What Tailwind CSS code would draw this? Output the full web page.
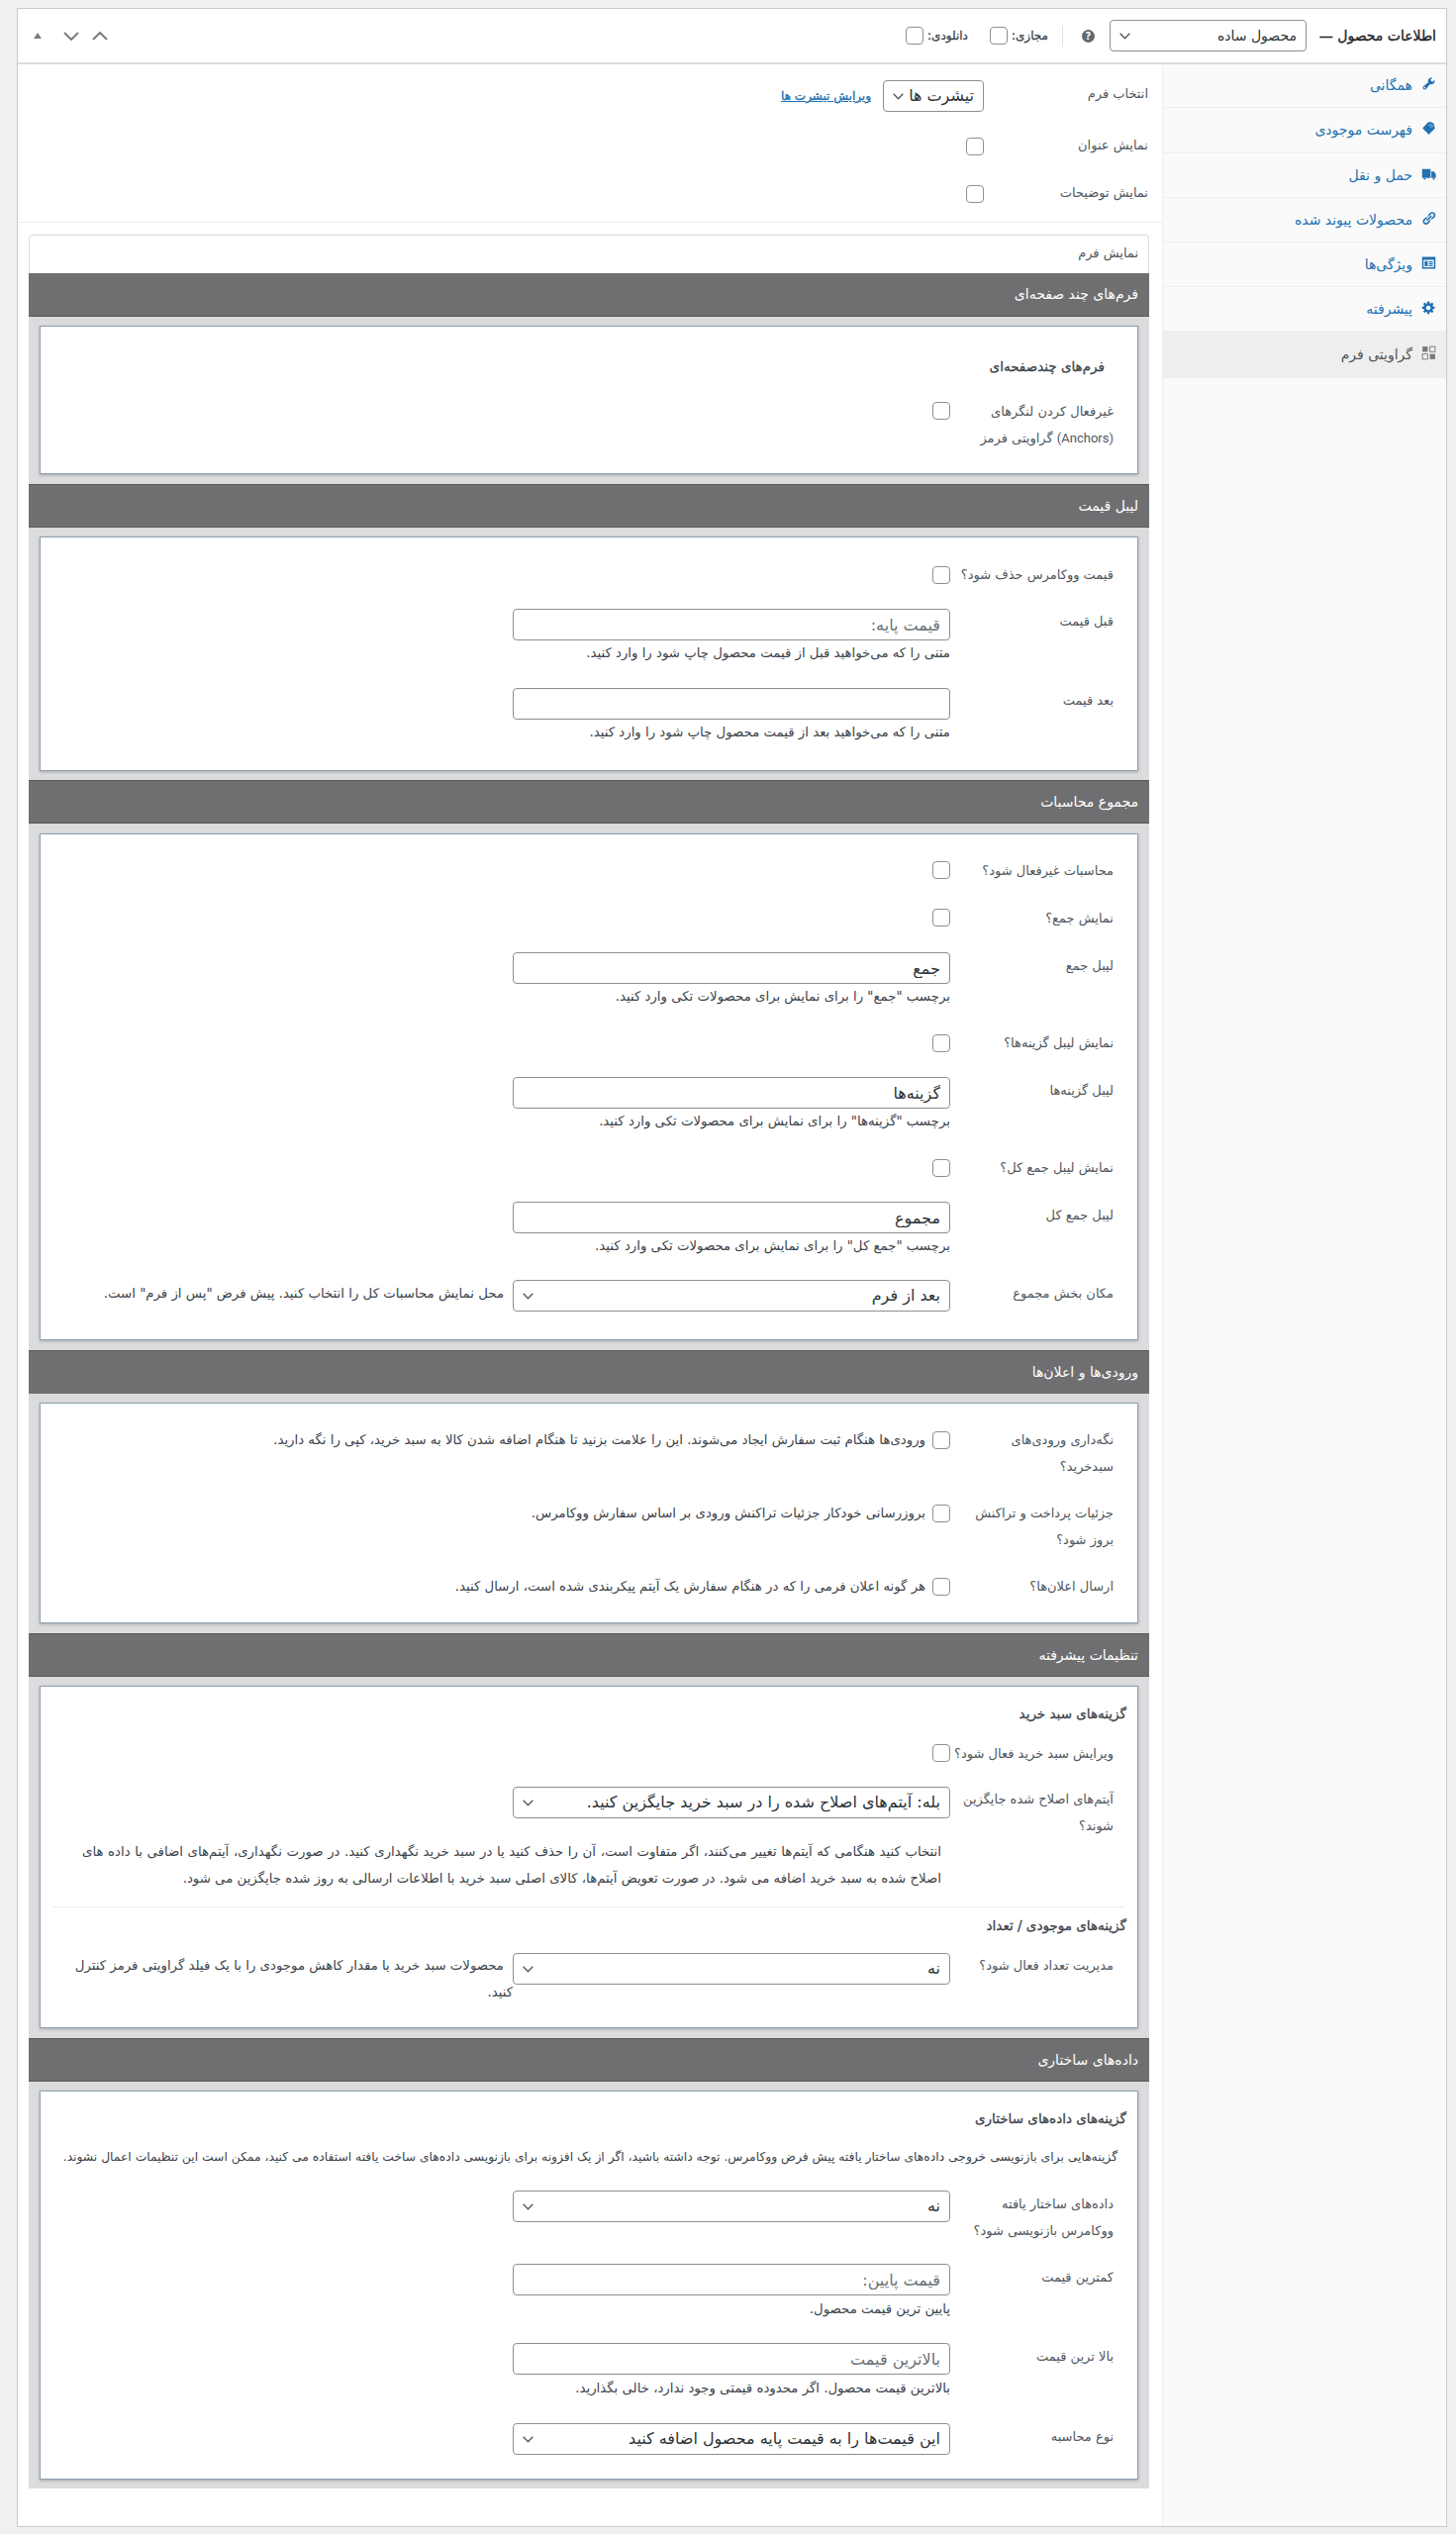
<!DOCTYPE html>
<html dir="rtl" lang="fa">
<head>
    <meta charset="UTF-8">
    <meta name="viewport" content="width=device-width, initial-scale=1.0">
    <title>اطلاعات محصول</title>
    <script src="https://cdn.jsdelivr.net/npm/@tailwindcss/browser@4"></script>
</head>
<body class="bg-[#f0f0f1] pt-2 pl-[17px] pr-[9px] font-['DejaVu_Sans',sans-serif] text-[13px] text-[#50575e]">

    <div class="bg-white border border-[#c9cacc]">

        <!-- Header -->
        <div class="h-[56px] border-b-2 border-[#dcdcde] flex items-center pr-[10px] pl-[16px]">
            <h2 class="text-[14px] [-webkit-text-stroke:0.35px] text-[#1d2327] whitespace-nowrap w-[118px] ml-[13px]">اطلاعات محصول —</h2>
            <span class="relative block w-[199px] h-[32px]">
                <select class="appearance-none w-full h-full bg-white border border-[#8c8f94] rounded px-[9px] text-[14px] text-[#2c3338]"><option>محصول ساده</option></select>
                <svg class="absolute left-[10px] top-[13px] w-[11px] h-[7px]" viewBox="0 0 11 7" fill="none" stroke="#50575e" stroke-width="1.3"><path d="M.7.7l4.8 5 4.8-5"/></svg>
            </span>
            <span class="w-[13px] h-[13px] rounded-full bg-[#646970] text-white text-[10px] font-bold leading-[13px] text-center mr-[15px]">?</span>
            <span class="w-px h-[21px] bg-[#e4e4e6] mr-[19px]"></span>
            <label class="flex items-center gap-[4px] text-[#3c434a] [-webkit-text-stroke:0.3px] text-[12px] mr-[14px]">مجازی:<input type="checkbox" class="appearance-none w-[18px] h-[18px] rounded bg-white border border-[#8c8f94]"></label>
            <label class="flex items-center gap-[4px] text-[#3c434a] [-webkit-text-stroke:0.3px] text-[12px] mr-[22px]">دانلودی:<input type="checkbox" class="appearance-none w-[18px] h-[18px] rounded bg-white border border-[#8c8f94]"></label>
            <div class="mr-auto flex items-center gap-[13px]" dir="ltr">
                <svg class="w-[8px] h-[6px]" viewBox="0 0 8 6" fill="#787c82"><path d="M4 0l4 6H0z"/></svg>
                <svg class="w-[16px] h-[9px] ml-[9px]" viewBox="0 0 16 9" fill="none" stroke="#787c82" stroke-width="2"><path d="M1 1l7 7 7-7"/></svg>
                <svg class="w-[16px] h-[9px]" viewBox="0 0 16 9" fill="none" stroke="#787c82" stroke-width="2"><path d="M1 8l7-7 7 7"/></svg>
            </div>
        </div>

        <div class="flex">

            <!-- Tabs -->
            <ul class="w-[287px] shrink-0 bg-[#fafafa] border-l border-[#eeeeee] text-[#2271b1] text-[14px]">
                <li class="h-[44px] border-b border-[#eeeeee] flex items-center gap-[9px] pr-[10px]">
                    <svg class="w-[15px] h-[15px] -mt-1" viewBox="0 0 20 20" fill="currentColor"><path d="M16.68 9.77c-1.34 1.34-3.3 1.67-4.95.99l-5.41 6.52c-.99.99-2.59.99-3.58 0s-.99-2.59 0-3.58l6.52-5.42c-.68-1.65-.35-3.61.99-4.95 1.28-1.28 3.12-1.62 4.72-1.06l-2.89 2.89 2.82 2.82 2.86-2.87c.53 1.58.18 3.39-1.08 4.66zM3.81 16.21c.4.39 1.04.39 1.43 0 .4-.4.4-1.04 0-1.43-.39-.4-1.03-.4-1.43 0-.39.39-.39 1.03 0 1.43z"/></svg>
                    همگانی
                </li>
                <li class="h-[46px] border-b border-[#eeeeee] flex items-center gap-[9px] pr-[10px]">
                    <svg class="w-[15px] h-[15px] -mt-1" viewBox="0 0 20 20" fill="currentColor"><path d="M9.5 1.5L1.5 10l8.5 8.5 8.5-8.5-2-6.5-3.5-2z"/><path d="M11.5 3.5l5 5M10 5.5l4 4" stroke="#fafafa" stroke-width="0.8" fill="none"/></svg>
                    فهرست موجودی
                </li>
                <li class="h-[45px] border-b border-[#eeeeee] flex items-center gap-[9px] pr-[10px]">
                    <svg class="w-[15px] h-[15px] -mt-1" viewBox="0 0 20 20" fill="currentColor"><path d="M1 3.5h11.5v12H5.9a2 2 0 0 0-2.8 0H1zM13.5 7H17l2.5 3.2v5.3h-1.4a2 2 0 0 0-2.8 0h-1.8z"/><circle cx="4.5" cy="16.5" r="1.5"/><circle cx="16.7" cy="16.5" r="1.5"/></svg>
                    حمل و نقل
                </li>
                <li class="h-[45px] border-b border-[#eeeeee] flex items-center gap-[9px] pr-[10px]">
                    <svg class="w-[15px] h-[15px] -mt-1" viewBox="0 0 20 20" fill="currentColor"><path d="M17.74 2.76c1.68 1.69 1.68 4.41 0 6.1l-1.53 1.52c-1.12 1.12-2.7 1.47-4.14 1.09l2.62-2.61.76-.77.76-.76c.84-.84.84-2.2 0-3.04-.84-.85-2.2-.85-3.04 0l-.77.76-3.38 3.38c-.37-1.44-.02-3.02 1.1-4.14l1.52-1.53c1.69-1.68 4.42-1.68 6.1 0zM8.59 13.43l5.34-5.34c.42-.42.42-1.1 0-1.52-.44-.43-1.13-.39-1.53 0l-5.33 5.34c-.42.42-.42 1.1 0 1.52.44.43 1.13.39 1.52 0zm-.76 2.29l4.14-4.15c.38 1.44.03 3.02-1.09 4.14l-1.52 1.53c-1.69 1.68-4.41 1.68-6.1 0-1.68-1.68-1.68-4.42 0-6.1l1.53-1.52c1.12-1.12 2.7-1.47 4.14-1.1l-4.14 4.15c-.85.84-.85 2.2 0 3.05.84.84 2.2.84 3.04 0z"/></svg>
                    محصولات پیوند شده
                </li>
                <li class="h-[45px] border-b border-[#eeeeee] flex items-center gap-[9px] pr-[10px]">
                    <svg class="w-[15px] h-[15px] -mt-1" viewBox="0 0 20 20" fill="currentColor"><path fill-rule="evenodd" d="M1 2h18v16H1zM3 6v10h14V6z"/><path d="M4.5 7.5h4v7h-4zM10 8h5.5v1.5H10zM10 10.5h5.5V12H10zM10 13h5.5v1.5H10z"/></svg>
                    ویژگی‌ها
                </li>
                <li class="h-[45px] border-b border-[#eeeeee] flex items-center gap-[9px] pr-[10px]">
                    <svg class="w-[15px] h-[15px] -mt-1" viewBox="0 0 20 20" fill="currentColor"><path d="M18 12h-2.18c-.17.7-.44 1.35-.81 1.93l1.54 1.54-2.1 2.1-1.54-1.54c-.58.36-1.23.63-1.91.79V19H8v-2.18c-.68-.16-1.33-.43-1.91-.79l-1.54 1.54-2.12-2.12 1.54-1.54c-.36-.58-.63-1.23-.79-1.91H1V9.03h2.17c.16-.7.44-1.35.8-1.94L2.43 5.55l2.1-2.1 1.54 1.54c.58-.37 1.24-.64 1.93-.81V2h3v2.18c.68.16 1.33.43 1.91.79l1.54-1.54 2.12 2.12-1.54 1.54c.36.59.64 1.24.8 1.94H18V12zm-8.5 1.5c1.66 0 3-1.34 3-3s-1.34-3-3-3-3 1.34-3 3 1.34 3 3 3z"/></svg>
                    پیشرفته
                </li>
                <li class="h-[47px] bg-[#eeeeee] text-[#555555] flex items-center gap-[9px] pr-[10px]">
                    <svg class="w-[15px] h-[15px] -mt-1" viewBox="0 0 20 20"><rect x="1.5" y="1.5" width="7" height="7" fill="#777"/><rect x="11.5" y="1.5" width="7" height="7" fill="none" stroke="#777" stroke-width="1.2"/><rect x="1.5" y="11.5" width="7" height="7" fill="none" stroke="#777" stroke-width="1.2"/><rect x="11.5" y="11.5" width="7" height="7" fill="#777"/></svg>
                    گراویتی فرم
                </li>
            </ul>

            <!-- Panel -->
            <div class="flex-1 min-w-0 pt-[16px] pb-[38px]">

                <div class="pr-[14px]">
                    <div class="flex">
                        <div class="w-[166px] shrink-0 leading-[27px]">انتخاب فرم</div>
                        <span class="relative block w-[102px] h-[32px]">
                            <select class="appearance-none w-full h-full bg-white border border-[#8c8f94] rounded px-[9px] text-[16px] text-[#2c3338]"><option>تیشرت ها</option></select>
                            <svg class="absolute left-[10px] top-[13px] w-[11px] h-[7px]" viewBox="0 0 11 7" fill="none" stroke="#50575e" stroke-width="1.3"><path d="M.7.7l4.8 5 4.8-5"/></svg>
                        </span>
                        <a href="#" class="mr-[12px] mt-[3px] leading-[27px] text-[12px] [-webkit-text-stroke:0.35px] text-[#2271b1] underline">ویرایش تیشرت ها</a>
                    </div>
                    <div class="flex mt-[20px]">
                        <div class="w-[166px] shrink-0 leading-[27px]">نمایش عنوان</div>
                        <input type="checkbox" class="appearance-none w-[18px] h-[18px] mt-[6px] rounded bg-white border border-[#8c8f94]">
                    </div>
                    <div class="flex mt-[21px]">
                        <div class="w-[166px] shrink-0 leading-[27px]">نمایش توضیحات</div>
                        <input type="checkbox" class="appearance-none w-[18px] h-[18px] mt-[6px] rounded bg-white border border-[#8c8f94]">
                    </div>
                </div>

                <div class="border-t border-[#eeeeee] mt-[16px]"></div>

                <div class="mt-[12px] mr-[13px] ml-[11px]">
                    <div class="h-[39px] border border-b-0 border-[#dcdcde] rounded-t pr-[10px] leading-[36px]">نمایش فرم</div>

                    <!-- Multi page forms -->
                    <div class="h-[44px] bg-[#6f6f71] border-b border-[#58585a] text-white text-[14px] pr-[11px] leading-[43px]">فرم‌های چند صفحه‌ای</div>
                    <div class="bg-[#dcdcde] px-[11px] pt-[9px] pb-[10px]">
                        <div class="h-[150px] bg-white border border-[#8ea2b2] shadow-[0_1px_3px_rgba(0,0,0,0.25)] pr-[24px] pt-[27px]">
                            <h3 class="text-[13.5px] [-webkit-text-stroke:0.3px] text-[#3c434a] leading-[27px] pr-[9px]">فرم‌های چندصفحه‌ای</h3>
                            <div class="flex mt-[18px]">
                                <div class="w-[165px] shrink-0 leading-[27px]">غیرفعال کردن لنگرهای<br><span class="font-['Roboto']">(Anchors)</span> گراویتی فرمز</div>
                                <input type="checkbox" class="appearance-none w-[18px] h-[18px] mt-[4px] rounded bg-white border border-[#8c8f94]">
                            </div>
                        </div>
                    </div>

                    <!-- Price label -->
                    <div class="h-[44px] bg-[#6f6f71] border-t border-b border-[#58585a] text-white text-[14px] pr-[11px] leading-[42px]">لیبل قیمت</div>
                    <div class="bg-[#dcdcde] px-[11px] pt-[9px] pb-[9px]">
                        <div class="h-[237px] bg-white border border-[#8ea2b2] shadow-[0_1px_3px_rgba(0,0,0,0.25)] pr-[24px] pt-[24px]">
                            <div class="flex">
                                <div class="w-[165px] shrink-0 leading-[27px]">قیمت ووکامرس حذف شود؟</div>
                                <input type="checkbox" class="appearance-none w-[18px] h-[18px] mt-[5px] rounded bg-white border border-[#8c8f94]">
                            </div>
                            <div class="flex mt-[20px]">
                                <div class="w-[165px] shrink-0 leading-[27px]">قبل قیمت</div>
                                <div class="pt-px">
                                    <input type="text" placeholder="قیمت پایه:" class="block w-[442px] h-[32px] bg-white border border-[#8c8f94] rounded px-[9px] text-[16px] text-[#2c3338] placeholder:text-[#6b7076]">
                                    <p class="leading-[26px] text-[13.3px] text-[#3c434a]">متنی را که می‌خواهید قبل از قیمت محصول چاپ شود را وارد کنید.</p>
                                </div>
                            </div>
                            <div class="flex mt-[21px]">
                                <div class="w-[165px] shrink-0 leading-[27px]">بعد قیمت</div>
                                <div class="pt-px">
                                    <input type="text" class="block w-[442px] h-[32px] bg-white border border-[#8c8f94] rounded px-[9px] text-[16px] text-[#2c3338]">
                                    <p class="leading-[26px] text-[13.3px] text-[#3c434a]">متنی را که می‌خواهید بعد از قیمت محصول چاپ شود را وارد کنید.</p>
                                </div>
                            </div>
                        </div>
                    </div>

                    <!-- Totals -->
                    <div class="h-[44px] bg-[#6f6f71] border-t border-b border-[#58585a] text-white text-[14px] pr-[11px] leading-[42px]">مجموع محاسبات</div>
                    <div class="bg-[#dcdcde] px-[11px] pt-[10px] pb-[10px]">
                        <div class="h-[512px] bg-white border border-[#8ea2b2] shadow-[0_1px_3px_rgba(0,0,0,0.25)] pr-[24px] pt-[23px]">
                            <div class="flex">
                                <div class="w-[165px] shrink-0 leading-[27px]">محاسبات غیرفعال شود؟</div>
                                <input type="checkbox" class="appearance-none w-[18px] h-[18px] mt-[4px] rounded bg-white border border-[#8c8f94]">
                            </div>
                            <div class="flex mt-[21px]">
                                <div class="w-[165px] shrink-0 leading-[27px]">نمایش جمع؟</div>
                                <input type="checkbox" class="appearance-none w-[18px] h-[18px] mt-[4px] rounded bg-white border border-[#8c8f94]">
                            </div>
                            <div class="flex mt-[21px]">
                                <div class="w-[165px] shrink-0 leading-[27px]">لیبل جمع</div>
                                <div>
                                    <input type="text" value="جمع" class="block w-[442px] h-[32px] bg-white border border-[#8c8f94] rounded px-[9px] text-[16px] text-[#2c3338]">
                                    <p class="leading-[26px] text-[13.3px] text-[#3c434a]">برچسب "جمع" را برای نمایش برای محصولات تکی وارد کنید.</p>
                                </div>
                            </div>
                            <div class="flex mt-[20px]">
                                <div class="w-[165px] shrink-0 leading-[27px]">نمایش لیبل گزینه‌ها؟</div>
                                <input type="checkbox" class="appearance-none w-[18px] h-[18px] mt-[5px] rounded bg-white border border-[#8c8f94]">
                            </div>
                            <div class="flex mt-[21px]">
                                <div class="w-[165px] shrink-0 leading-[27px]">لیبل گزینه‌ها</div>
                                <div>
                                    <input type="text" value="گزینه‌ها" class="block w-[442px] h-[32px] bg-white border border-[#8c8f94] rounded px-[9px] text-[16px] text-[#2c3338]">
                                    <p class="leading-[26px] text-[13.3px] text-[#3c434a]">برچسب "گزینه‌ها" را برای نمایش برای محصولات تکی وارد کنید.</p>
                                </div>
                            </div>
                            <div class="flex mt-[20px]">
                                <div class="w-[165px] shrink-0 leading-[27px]">نمایش لیبل جمع کل؟</div>
                                <input type="checkbox" class="appearance-none w-[18px] h-[18px] mt-[5px] rounded bg-white border border-[#8c8f94]">
                            </div>
                            <div class="flex mt-[21px]">
                                <div class="w-[165px] shrink-0 leading-[27px]">لیبل جمع کل</div>
                                <div>
                                    <input type="text" value="مجموع" class="block w-[442px] h-[32px] bg-white border border-[#8c8f94] rounded px-[9px] text-[16px] text-[#2c3338]">
                                    <p class="leading-[26px] text-[13.3px] text-[#3c434a]">برچسب "جمع کل" را برای نمایش برای محصولات تکی وارد کنید.</p>
                                </div>
                            </div>
                            <div class="flex mt-[21px]">
                                <div class="w-[165px] shrink-0 leading-[27px]">مکان بخش مجموع</div>
                                <span class="relative block w-[442px] h-[32px]">
                                    <select class="appearance-none w-full h-full bg-white border border-[#8c8f94] rounded px-[9px] text-[16px] text-[#2c3338]"><option>بعد از فرم</option></select>
                                    <svg class="absolute left-[10px] top-[13px] w-[11px] h-[7px]" viewBox="0 0 11 7" fill="none" stroke="#50575e" stroke-width="1.3"><path d="M.7.7l4.8 5 4.8-5"/></svg>
                                </span>
                                <p class="mr-[9px] leading-[27px] text-[13.3px] text-[#3c434a]">محل نمایش محاسبات کل را انتخاب کنید. پیش فرض "پس از فرم" است.</p>
                            </div>
                        </div>
                    </div>

                    <!-- Entries and notifications -->
                    <div class="h-[44px] bg-[#6f6f71] border-t border-[#58585a] text-white text-[14px] pr-[11px] leading-[42px]">ورودی‌ها و اعلان‌ها</div>
                    <div class="bg-[#dcdcde] px-[11px] pt-[9px] pb-[10px]">
                        <div class="h-[223px] bg-white border border-[#8ea2b2] shadow-[0_1px_3px_rgba(0,0,0,0.25)] pr-[24px] pt-[23px]">
                            <div class="flex">
                                <div class="w-[165px] shrink-0 leading-[27px]">نگه‌داری ورودی‌های<br>سبدخرید؟</div>
                                <input type="checkbox" class="appearance-none w-[18px] h-[18px] mt-[5px] rounded bg-white border border-[#8c8f94]">
                                <p class="mr-[7px] leading-[27px] text-[13.3px] text-[#3c434a]">ورودی‌ها هنگام ثبت سفارش ایجاد می‌شوند. این را علامت بزنید تا هنگام اضافه شدن کالا به سبد خرید، کپی را نگه دارید.</p>
                            </div>
                            <div class="flex mt-[20px]">
                                <div class="w-[165px] shrink-0 leading-[27px]">جزئیات پرداخت و تراکنش<br>بروز شود؟</div>
                                <input type="checkbox" class="appearance-none w-[18px] h-[18px] mt-[5px] rounded bg-white border border-[#8c8f94]">
                                <p class="mr-[7px] leading-[27px] text-[13.3px] text-[#3c434a]">بروزرسانی خودکار جزئیات تراکنش ورودی بر اساس سفارش ووکامرس.</p>
                            </div>
                            <div class="flex mt-[20px]">
                                <div class="w-[165px] shrink-0 leading-[27px]">ارسال اعلان‌ها؟</div>
                                <input type="checkbox" class="appearance-none w-[18px] h-[18px] mt-[5px] rounded bg-white border border-[#8c8f94]">
                                <p class="mr-[7px] leading-[27px] text-[13.3px] text-[#3c434a]">هر گونه اعلان فرمی را که در هنگام سفارش یک آیتم پیکربندی شده است، ارسال کنید.</p>
                            </div>
                        </div>
                    </div>

                    <!-- Advanced settings -->
                    <div class="h-[44px] bg-[#6f6f71] border-t border-b border-[#58585a] text-white text-[14px] pr-[11px] leading-[42px]">تنظیمات پیشرفته</div>
                    <div class="bg-[#dcdcde] px-[11px] pt-[9px] pb-[10px]">
                        <div class="h-[346px] bg-white border border-[#8ea2b2] shadow-[0_1px_3px_rgba(0,0,0,0.25)] pr-[11px] pt-[14px]">
                            <h3 class="text-[13.5px] [-webkit-text-stroke:0.3px] text-[#3c434a] leading-[27px]">گزینه‌های سبد خرید</h3>
                            <div class="pr-[13px]">
                                <div class="flex mt-[13px]">
                                    <div class="w-[165px] shrink-0 leading-[27px] whitespace-nowrap">ویرایش سبد خرید فعال شود؟</div>
                                    <input type="checkbox" class="appearance-none w-[18px] h-[18px] mt-[4px] rounded bg-white border border-[#8c8f94]">
                                </div>
                                <div class="flex mt-[19px]">
                                    <div class="w-[165px] shrink-0 leading-[27px]">آیتم‌های اصلاح شده جایگزین شوند؟</div>
                                    <span class="relative block w-[442px] h-[32px] mt-px">
                                        <select class="appearance-none w-full h-full bg-white border border-[#8c8f94] rounded px-[9px] text-[16px] text-[#2c3338]"><option>بله: آیتم‌های اصلاح شده را در سبد خرید جایگزین کنید.</option></select>
                                        <svg class="absolute left-[10px] top-[13px] w-[11px] h-[7px]" viewBox="0 0 11 7" fill="none" stroke="#50575e" stroke-width="1.3"><path d="M.7.7l4.8 5 4.8-5"/></svg>
                                    </span>
                                </div>
                                <p class="pr-[174px] pl-[42px] -mt-px leading-[27px] text-[13.3px] text-[#3c434a] text-justify">انتخاب کنید هنگامی که آیتم‌ها تغییر می‌کنند، اگر متفاوت است، آن را حذف کنید یا در سبد خرید نگهداری کنید. در صورت نگهداری، آیتم‌های اضافی با داده های اصلاح شده به سبد خرید اضافه می شود. در صورت تعویض آیتم‌ها، کالای اصلی سبد خرید با اطلاعات ارسالی به روز شده جایگزین می شود.</p>
                            </div>
                            <div class="border-t border-[#eeeeee] mt-[15px] ml-[12px] mr-[2px]"></div>
                            <h3 class="text-[13.5px] [-webkit-text-stroke:0.3px] text-[#3c434a] leading-[27px] mt-[5px]">گزینه‌های موجودی / تعداد</h3>
                            <div class="pr-[13px] flex mt-[13px]">
                                <div class="w-[165px] shrink-0 leading-[27px]">مدیریت تعداد فعال شود؟</div>
                                <span class="relative block w-[442px] h-[32px] mt-px">
                                    <select class="appearance-none w-full h-full bg-white border border-[#8c8f94] rounded px-[9px] text-[16px] text-[#2c3338]"><option>نه</option></select>
                                    <svg class="absolute left-[10px] top-[13px] w-[11px] h-[7px]" viewBox="0 0 11 7" fill="none" stroke="#50575e" stroke-width="1.3"><path d="M.7.7l4.8 5 4.8-5"/></svg>
                                </span>
                                <div class="mr-[9px] leading-[27px] text-[13.3px] text-[#3c434a]">
                                    <p>محصولات سبد خرید یا مقدار کاهش موجودی را با یک فیلد گراویتی فرمز کنترل</p>
                                    <p class="-mr-[9px]">کنید.</p>
                                </div>
                            </div>
                        </div>
                    </div>

                    <!-- Structured data -->
                    <div class="h-[44px] bg-[#6f6f71] border-t border-b border-[#58585a] text-white text-[14px] pr-[11px] leading-[42px]">داده‌های ساختاری</div>
                    <div class="bg-[#dcdcde] px-[11px] pt-[9px] pb-[9px]">
                        <div class="h-[393px] bg-white border border-[#8ea2b2] shadow-[0_1px_3px_rgba(0,0,0,0.25)] pr-[11px] pt-[14px]">
                            <h3 class="text-[13.5px] [-webkit-text-stroke:0.3px] text-[#3c434a] leading-[27px]">گزینه‌های داده‌های ساختاری</h3>
                            <p class="pr-[9px] mt-[12px] leading-[27px] text-[#3c434a] text-[12.3px]">گزینه‌هایی برای بازنویسی خروجی داده‌های ساختار یافته پیش فرض ووکامرس. توجه داشته باشید، اگر از یک افزونه برای بازنویسی داده‌های ساخت یافته استفاده می کنید، ممکن است این تنظیمات اعمال نشوند.</p>
                            <div class="pr-[13px]">
                                <div class="flex mt-[20px]">
                                    <div class="w-[165px] shrink-0 leading-[27px]">داده‌های ساختار یافته<br>ووکامرس بازنویسی شود؟</div>
                                    <span class="relative block w-[442px] h-[32px]">
                                        <select class="appearance-none w-full h-full bg-white border border-[#8c8f94] rounded px-[9px] text-[16px] text-[#2c3338]"><option>نه</option></select>
                                        <svg class="absolute left-[10px] top-[13px] w-[11px] h-[7px]" viewBox="0 0 11 7" fill="none" stroke="#50575e" stroke-width="1.3"><path d="M.7.7l4.8 5 4.8-5"/></svg>
                                    </span>
                                </div>
                                <div class="flex mt-[20px]">
                                    <div class="w-[165px] shrink-0 leading-[27px]">کمترین قیمت</div>
                                    <div>
                                        <input type="text" placeholder="قیمت پایین:" class="block w-[442px] h-[32px] bg-white border border-[#8c8f94] rounded px-[9px] text-[16px] text-[#2c3338] placeholder:text-[#6b7076]">
                                        <p class="leading-[28px] text-[13.3px] text-[#3c434a]">پایین ترین قیمت محصول.</p>
                                    </div>
                                </div>
                                <div class="flex mt-[20px]">
                                    <div class="w-[165px] shrink-0 leading-[27px]">بالا ترین قیمت</div>
                                    <div>
                                        <input type="text" placeholder="بالاترین قیمت" class="block w-[442px] h-[32px] bg-white border border-[#8c8f94] rounded px-[9px] text-[16px] text-[#2c3338] placeholder:text-[#6b7076]">
                                        <p class="leading-[28px] text-[13.3px] text-[#3c434a]">بالاترین قیمت محصول. اگر محدوده قیمتی وجود ندارد، خالی بگذارید.</p>
                                    </div>
                                </div>
                                <div class="flex mt-[21px]">
                                    <div class="w-[165px] shrink-0 leading-[27px]">نوع محاسبه</div>
                                    <span class="relative block w-[442px] h-[32px]">
                                        <select class="appearance-none w-full h-full bg-white border border-[#8c8f94] rounded px-[9px] text-[16px] text-[#2c3338]"><option>این قیمت‌ها را به قیمت پایه محصول اضافه کنید</option></select>
                                        <svg class="absolute left-[10px] top-[13px] w-[11px] h-[7px]" viewBox="0 0 11 7" fill="none" stroke="#50575e" stroke-width="1.3"><path d="M.7.7l4.8 5 4.8-5"/></svg>
                                    </span>
                                </div>
                            </div>
                        </div>
                    </div>
                </div>
            </div>
        </div>
    </div>

</body>
</html>
